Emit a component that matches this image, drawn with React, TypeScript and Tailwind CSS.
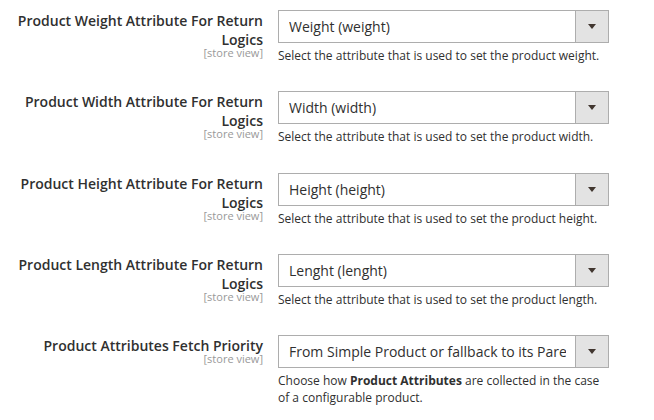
import React from "react";

interface FieldProps {
  label: string;
  value: string;
  note: React.ReactNode;
}

const fields: FieldProps[] = [
  {
    label: "Product Weight Attribute For Return Logics",
    value: "Weight (weight)",
    note: "Select the attribute that is used to set the product weight.",
  },
  {
    label: "Product Width Attribute For Return Logics",
    value: "Width (width)",
    note: "Select the attribute that is used to set the product width.",
  },
  {
    label: "Product Height Attribute For Return Logics",
    value: "Height (height)",
    note: "Select the attribute that is used to set the product height.",
  },
  {
    label: "Product Length Attribute For Return Logics",
    value: "Lenght (lenght)",
    note: "Select the attribute that is used to set the product length.",
  },
  {
    label: "Product Attributes Fetch Priority",
    value: "From Simple Product or fallback to its Parent",
    note: (
      <>
        Choose how <strong className="font-bold">Product Attributes</strong> are collected in the case of a
        configurable product.
      </>
    ),
  },
];

const Field: React.FC<FieldProps> = ({ label, value, note }) => {
  return (
    <div className="flex items-start">
      {/* Label */}
      <div className="w-[263px] shrink-0 pt-px text-right">
        <div className="text-[14px] font-semibold leading-[19px] text-[#303030]">{label}</div>
        <div className="-mt-[2px] text-[11px] leading-[12px] text-[#999]">[store view]</div>
      </div>

      {/* Control */}
      <div className="ml-[15px] w-[331px] shrink-0">
        <div className="flex h-[33px] border border-[#adadad] bg-white">
          <div className="min-w-0 flex-1 pl-[10px] pr-[9px]">
            <div className="overflow-hidden whitespace-nowrap text-[14px] leading-[31px] text-[#303030]">{value}</div>
          </div>
          <div className="flex w-[33px] shrink-0 items-center justify-center border-l border-[#adadad] bg-[#e3e3e3]">
            <span className="block h-0 w-0 border-x-[4px] border-t-[5px] border-x-transparent border-t-[#41362f]" />
          </div>
        </div>
        <div className="mt-[4px] text-[12px] leading-[17px] text-[#303030]">{note}</div>
      </div>
    </div>
  );
};

export default function App() {
  return (
    <div
      className="min-h-[420px] w-[654px] bg-white pt-[10px]"
      style={{ fontFamily: '"Open Sans", "Liberation Sans", sans-serif' }}
    >
      <div className="flex flex-col gap-[27.25px]">
        {fields.map((f) => (
          <Field key={f.label} {...f} />
        ))}
      </div>
    </div>
  );
}
